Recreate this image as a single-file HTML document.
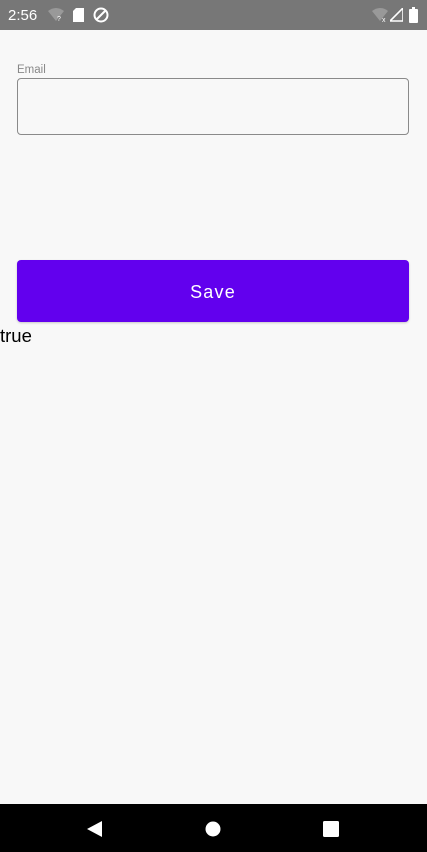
<!DOCTYPE html>
<html><head><meta charset="utf-8"><style>
*{margin:0;padding:0;box-sizing:border-box}
body{width:427px;height:852px;background:#f8f8f8;font-family:"Liberation Sans",sans-serif;position:relative;overflow:hidden}
.sb{position:absolute;top:0;left:0;width:427px;height:30px;background:#777;color:#fff}
.nav{position:absolute;bottom:0;left:0;width:427px;height:48px;background:#000}
</style></head><body>
<div class="sb">
<div style="position:absolute;left:8px;top:7px;font-size:15px">2:56</div>
<svg style="position:absolute;left:48px;top:8px" width="16" height="14"><path d="M0 3 Q8 -3 16 3 L8 13Z" fill="#999"/><text x="9" y="13" font-size="7" fill="#fff" font-family="Liberation Sans">?</text></svg>
<svg style="position:absolute;left:73px;top:8px" width="12" height="14"><path d="M3 0H11V14H0V3Z" fill="#fff"/></svg>
<svg style="position:absolute;left:93px;top:7px" width="16" height="16"><circle cx="8" cy="8" r="6.5" fill="none" stroke="#fff" stroke-width="2"/><path d="M4 12L12 4" stroke="#fff" stroke-width="2"/></svg>
<svg style="position:absolute;left:372px;top:8px" width="16" height="14"><path d="M0 3 Q8 -3 16 3 L8 13Z" fill="#999"/><text x="10" y="14" font-size="7" fill="#fff">x</text></svg>
<svg style="position:absolute;left:390px;top:8px" width="13" height="14"><path d="M13 0V13H0Z" fill="none" stroke="#fff" stroke-width="1.6"/></svg>
<svg style="position:absolute;left:409px;top:7px" width="9" height="16"><rect x="0" y="2" width="9" height="14" rx="1" fill="#fff"/><rect x="3" y="0" width="3" height="2" fill="#fff"/></svg>
</div>
<div style="position:absolute;left:17px;top:64px;font-size:11.5px;color:#888">Email</div>
<div style="position:absolute;left:17px;top:78px;width:392px;height:57px;border:1px solid #8a8a8a;border-radius:4px"></div>
<div style="position:absolute;left:17px;top:260px;width:392px;height:62px;background:#6200ee;border-radius:4px;color:#fff;font-size:18px;font-weight:500;letter-spacing:1.2px;text-align:center;line-height:64px;box-shadow:0 1px 2px rgba(0,0,0,.2)">Save</div>
<div style="position:absolute;left:0;top:325px;font-size:18.5px;color:#000">true</div>
<div class="nav">
<svg style="position:absolute;left:87px;top:17px" width="15" height="16"><path d="M15 0V16L0 8Z" fill="#fff"/></svg>
<svg style="position:absolute;left:205px;top:17px" width="16" height="16"><circle cx="8" cy="8" r="7.5" fill="#fff"/></svg>
<svg style="position:absolute;left:323px;top:17px" width="16" height="16"><rect width="16" height="16" rx="1.5" fill="#fff"/></svg>
</div>
</body></html>
